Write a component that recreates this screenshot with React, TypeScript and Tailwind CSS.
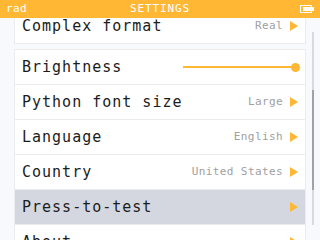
import React from 'react';

const mono = { fontFamily: '"DejaVu Sans Mono", "Liberation Mono", monospace' };

function Arrow() {
  return (
    <svg width="8" height="10" viewBox="0 0 8 10" className="ml-[7px] shrink-0">
      <polygon points="0,0 8,5 0,10" fill="#FFB734" />
    </svg>
  );
}

function Battery() {
  return (
    <svg width="14" height="8" viewBox="0 0 14 8">
      <rect x="0.5" y="0.5" width="11" height="7" fill="none" stroke="#fff" />
      <rect x="3" y="2" width="8" height="4" fill="#fff" />
      <rect x="12" y="2" width="2" height="4" fill="#fff" />
    </svg>
  );
}

interface RowProps {
  label: string;
  value?: string;
  arrow?: boolean;
  slider?: boolean;
  selected?: boolean;
  first?: boolean;
}

function Row({ label, value, arrow, slider, selected, first }: RowProps) {
  return (
    <div
      className={
        'flex items-center justify-between pl-[7px] pr-[7px] ' +
        (first ? 'h-[34px] ' : 'h-[35px] border-t border-[#ECECEC] ') +
        (selected ? 'bg-[#D4D7E0]' : 'bg-white')
      }
    >
      <span className="text-[15px] tracking-[1px] text-[#1c1c1c]" style={mono}>
        {label}
      </span>
      {slider ? (
        <div className="relative w-[118px] h-[10px] flex items-center mr-[-3px]">
          <div className="h-[2px] w-[113px] bg-[#FFB734]" />
          <div className="absolute right-[1px] w-[9px] h-[9px] rounded-full bg-[#FFB734]" />
        </div>
      ) : (
        <div className="flex items-center">
          {value && (
            <span className="text-[11px] tracking-[0.4px] text-[#A0A0A0]" style={mono}>
              {value}
            </span>
          )}
          {arrow && <Arrow />}
        </div>
      )}
    </div>
  );
}

export default function App() {
  return (
    <div className="w-[320px] h-[240px] flex flex-col bg-[#F7F9FD] overflow-hidden relative">
      <div className="h-[18px] shrink-0 bg-[#FFB734] flex items-center justify-between pl-[6px] pr-[6px] relative z-10 text-white" style={mono}>
        <span className="text-[11px] tracking-[0.4px]">rad</span>
        <span className="absolute left-0 right-0 text-center text-[11px] tracking-[0.9px]">SETTINGS</span>
        <Battery />
      </div>

      <div className="flex-1 overflow-hidden relative">
        <div className="px-[14px] mt-[-10px] flex flex-col gap-[5px]">
          <div className="border border-[#ECECEC]">
            <Row label="Complex format" value="Real" arrow first />
          </div>
          <div className="border border-[#ECECEC]">
            <Row label="Brightness" slider first />
            <Row label="Python font size" value="Large" arrow />
            <Row label="Language" value="English" arrow />
            <Row label="Country" value="United States" arrow />
            <Row label="Press-to-test" arrow selected />
            <Row label="About" arrow />
          </div>
        </div>

        <div className="absolute left-[312px] top-[14px] w-[2px] h-[193px] bg-[#D9D9DF]">
          <div className="mt-[58px] h-[100px] bg-[#A0A0A8]" />
        </div>
      </div>
    </div>
  );
}
